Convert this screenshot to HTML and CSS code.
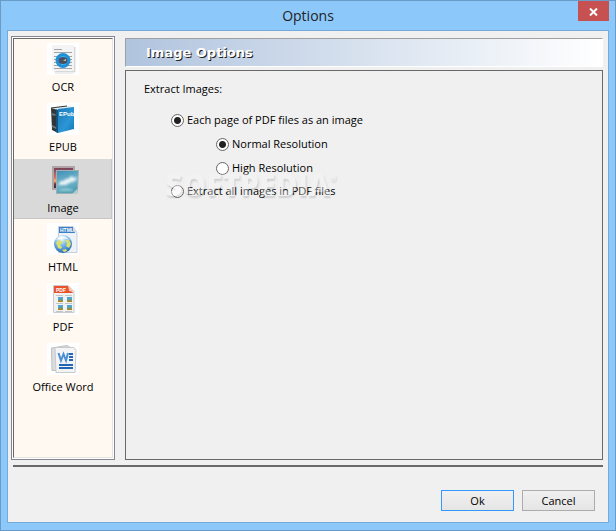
FILE: index.html
```html
<!DOCTYPE html>
<html lang="en">
<head>
<meta charset="utf-8">
<title>Options</title>
<link rel="stylesheet" href="styles.css">
</head>
<body>
<div class="window">
  <header class="titlebar">
    <h1 class="title">Options</h1>
    <button class="close" type="button" aria-label="Close">
      <svg width="9" height="8" viewBox="0 0 9 8"><path d="M1 .5 8 7.5M8 .5 1 7.5" stroke="#fff" stroke-width="2" fill="none"/></svg>
    </button>
  </header>
  <main class="client">
    <div class="columns">
      <nav class="sidebar">
        <div class="list">
          <button class="item" type="button">
            <svg class="icon" viewBox="0 0 32 32">
              <rect width="32" height="32" fill="#fff"/>
              <path d="M5 4h24v25l-4 2H8z" fill="#eee"/><path d="M6 4h22v25H8z" fill="#d8d8d8"/>
              <rect x="5" y="2" width="22" height="26" rx="1" fill="#f4f4f4"/>
              <path d="M7 6.500h8M7 9.500h18M7 13.500h18M7 16.500h18M7 19.500h18M7 22.500h18M7 25.500h18" stroke="#a3a3a3"/>
              <circle cx="16" cy="17.500" r="6" fill="#3fb0ef" stroke="#1e90d8" stroke-width="3"/>
              <ellipse cx="16" cy="17.500" rx="4.500" ry="3.500" fill="#4b5060"/>
              <path d="M16 17.500l3-1.500v2z" fill="#c4ccd4"/>
            </svg>
            <span>OCR</span>
          </button>
          <button class="item" type="button">
            <svg class="icon" viewBox="0 0 32 32">
              <defs><linearGradient id="book" x2="1" y2="1"><stop stop-color="#1a78b5"/><stop offset=".6" stop-color="#2c96d6"/><stop offset="1" stop-color="#1277b5"/></linearGradient></defs>
              <rect width="32" height="32" fill="#fff"/>
              <path d="M4 5 20 3l7 1v2L11 7z" fill="#dfe9f0"/><path d="M4 5 20 3" stroke="#333"/>
              <path d="M4 5l7 2v23l-6-3z" fill="#30373c"/>
              <path d="M9 6.500 11 7v23l-2-1z" fill="#11557f"/>
              <path d="M4.500 10l4 1v2l-4-1zM5 22l4 2v2l-4-2z" fill="#6c757b"/>
              <path d="M11 6 27 4v22l-16 4z" fill="url(#book)"/>
              <text class="epub-mark" x="12" y="13">EPub</text>
            </svg>
            <span>EPUB</span>
          </button>
          <button class="item selected" type="button" aria-current="page">
            <svg class="icon" viewBox="0 0 32 32">
              <defs>
                <linearGradient id="dusk" x2="0" y2="1"><stop stop-color="#76435a"/><stop offset=".5" stop-color="#dc7265"/><stop offset=".65" stop-color="#ffb95b"/><stop offset=".8" stop-color="#653849"/><stop offset="1" stop-color="#402b3b"/></linearGradient>
                <linearGradient id="sky" x2=".3" y2="1"><stop stop-color="#3f8fb4"/><stop offset=".6" stop-color="#74b6ce"/><stop offset="1" stop-color="#4c9eb4"/></linearGradient>
                <filter id="soft"><feGaussianBlur stdDeviation="1"/></filter>
              </defs>
              <path d="M5 2h23v24H5z" fill="#b0a5a6"/><path d="M7 4h19v20H7z" fill="url(#dusk)"/>
              <path d="M9 6h23l-1 20-1 4H9z" fill="#9fb0b4"/><path d="M10 7h21l-1 19-2 3H10z" fill="url(#sky)"/>
              <g filter="url(#soft)">
                <path d="M12 19q2-3 5-2 1-3 4-2 4-5 6-1l3-1-2 4-6 2-3 2-7 0z" fill="#e6f1f4"/>
                <path d="M12 26q7-3 15 0l-2 1H12z" fill="#9cced4"/>
              </g>
              <path d="m25 30 5-5v5z" fill="#b5caca"/>
            </svg>
            <span>Image</span>
          </button>
          <button class="item" type="button">
            <svg class="icon" viewBox="0 0 32 32">
              <defs><radialGradient id="globe" cx=".4" cy=".2" r=".85"><stop stop-color="#fff"/><stop offset=".45" stop-color="#78b8ec"/><stop offset="1" stop-color="#1c62b0"/></radialGradient></defs>
              <rect width="32" height="32" fill="#fff"/>
              <path d="M11.500 3.500H26l4 6v20H11.500z" fill="#edf1f8" stroke="#c6cedb"/>
              <path d="M12 4h14l2 6H12z" fill="#3b7fc4"/><path d="m26 3 4 7-4-2z" fill="#d5deea"/>
              <text class="html-mark" x="13" y="9">HTML</text>
              <circle cx="16" cy="21" r="9" fill="url(#globe)"/>
              <path d="M9 20q2-4 5-2l2 1-3 3 2 2-1 2-3-1-1-3zM18 17l4 0 2 4-2 4-3-2 1-3zM15 27l4-1 1 2-3 1z" fill="#dbe06a"/>
              <path d="M9 17q6-8 14 0-8-3-14 0z" fill="#fff" opacity=".7"/>
            </svg>
            <span>HTML</span>
          </button>
          <button class="item" type="button">
            <svg class="icon" viewBox="0 0 32 32">
              <rect width="32" height="32" fill="#fff"/>
              <path d="M6.500 2.500H21l6 6v21H6.500z" fill="#f1f1f1" stroke="#ccc"/>
              <path d="M7 3h14l5 7H7z" fill="#e8532e"/><path d="m21 2 6 7-5-1z" fill="#f7c7b4"/>
              <text class="pdf-mark" x="9" y="9">PDF</text>
              <path d="M9 12.500h7m2 0h7M9 20.500h7m2 0h7M9 28.500h7m2 0h7" stroke="#c4c4c4"/>
              <path d="M11 14h5v5h-5zM20 14h5v5h-5zM11 22h5v5h-5zM20 22h5v5h-5z" fill="#4ba6d1"/>
              <path d="M11 18l3-2 2 2v1h-5zM20 18l3-2 2 2v1h-5zM11 26l3-2 2 2v1h-5zM20 26l3-2 2 2v1h-5z" fill="#a68a2e"/>
            </svg>
            <span>PDF</span>
          </button>
          <button class="item" type="button">
            <svg class="icon" viewBox="0 0 32 32">
              <rect width="32" height="32" fill="#fff"/>
              <path d="M4.500 5 20 2.500 24 5v22L5 27.500z" fill="#dcdcdc" stroke="#c0c0c0"/>
              <path d="M8 4.500h19l2 3-1 22H9z" fill="#f3f4f6" stroke="#c8cacc"/>
              <path d="M11.500 10 14 17.500 16.500 11 19 17.500 21 10" fill="none" stroke="#4a8fd4" stroke-width="2"/>
              <path d="M22 11h4M22 14h4M22 17h4M12 22h14M12 25h14" stroke="#2266b8" stroke-width="2"/>
            </svg>
            <span>Office Word</span>
          </button>
        </div>
      </nav>
      <section class="content">
        <h2 class="banner">Image Options</h2>
        <div class="panel">
          <p class="caption">Extract Images:</p>
          <div class="choices">
            <label class="choice"><input type="radio" name="mode" checked>Each page of PDF files as an image</label>
            <div class="sub">
              <label class="choice"><input type="radio" name="resolution" checked>Normal Resolution</label>
              <label class="choice"><input type="radio" name="resolution">High Resolution</label>
            </div>
            <label class="choice last"><input type="radio" name="mode">Extract all images in PDF files<span class="watermark" aria-hidden="true">SOFTPEDIA<sup>®</sup></span></label>
          </div>
        </div>
      </section>
    </div>
    <hr class="rule">
    <footer class="actions">
      <button class="btn primary" type="button">Ok</button>
      <button class="btn" type="button">Cancel</button>
    </footer>
  </main>
</div>
</body>
</html>
```
FILE: styles.css
```css
* { box-sizing: border-box; }

body {
  margin: 0;
  font: 11px/16px "Open Sans", "Noto Sans", sans-serif;
  color: #000;
}

button { font: inherit; color: inherit; }

.window {
  display: flex;
  flex-direction: column;
  min-height: 100vh;
  padding: 0 6px 7px;
  border: 1px solid #6a9ac6;
  background: #8cc8fa;
}

.titlebar {
  display: grid;
  grid-template-columns: 1fr auto 1fr;
  height: 29px;
}

.title {
  grid-column: 2;
  margin: 0;
  font-size: 14px;
  font-weight: 400;
  line-height: 30px;
  color: #222;
}

.close {
  display: grid;
  place-items: center;
  justify-self: end;
  width: 31px;
  height: 20px;
  padding: 2px 0 0;
  border: 0;
  background: #c75050;
}

.client {
  display: flex;
  flex: 1;
  flex-direction: column;
  padding: 5px 5px 11px 3px;
  border: 1px solid #75a9d9;
  background: #f0f0f0;
}

.columns {
  display: flex;
  flex: 1;
  gap: 10px;
}

.sidebar {
  display: flex;
  width: 104px;
  padding: 1px;
  border: 1px solid #828790;
  background: #fff;
}

.list {
  flex: 1;
  border: 1px solid;
  border-color: #696969 #e3e3e3 #e3e3e3 #696969;
  background: #fff9f2;
}

.item {
  display: flex;
  flex-direction: column;
  align-items: center;
  gap: 4px;
  width: 100%;
  height: 60px;
  padding: 4px 0 0;
  border: 0;
  background: none;
}

.item.selected {
  padding-top: 5px;
  background: #d9d9d9;
  box-shadow: inset -1px -1px #c6c6c6;
}

.icon { flex: none; width: 32px; height: 32px; }

.epub-mark, .html-mark, .pdf-mark {
  font-family: "Liberation Sans", sans-serif;
  font-weight: 700;
  fill: #fff;
}

.epub-mark { font-size: 6px; }
.html-mark, .pdf-mark { font-size: 5px; }

.content {
  display: flex;
  flex: 1;
  flex-direction: column;
  gap: 3px;
  padding-top: 2px;
}

.banner {
  margin: 0;
  padding: 0 20px;
  border: 1px solid;
  border-color: #a0a0a0 #fff #fff #a0a0a0;
  background: linear-gradient(90deg, #b0c4de, #fff);
  font: 700 13px/27px "DejaVu Sans", sans-serif;
  color: #fff;
  text-shadow: 1px 1px #222;
}

.panel {
  flex: 1;
  padding: 10px 18px;
  border: 1px solid #696969;
}

.caption { margin: 0; }

.choices {
  display: flex;
  flex-direction: column;
  align-items: flex-start;
  gap: 8px;
  padding: 15px 27px;
}

.sub {
  display: flex;
  flex-direction: column;
  gap: 8px;
  padding-left: 45px;
}

.choice {
  position: relative;
  display: flex;
  align-items: center;
  gap: 3px;
}

.last { margin-top: -1px; }

.choice input {
  appearance: none;
  width: 13px;
  height: 13px;
  margin: 0;
  border: 1px solid #666;
  border-radius: 50%;
  background: #fff;
}

.choice input:checked {
  background: radial-gradient(circle, #222 3px, #fff 4px);
}

.watermark {
  position: absolute;
  top: -14px;
  left: -6px;
  font: 800 30px/32px "Open Sans", sans-serif;
  color: #f6f6f6;
  opacity: 0.4;
  text-shadow: 1px 2px 2px rgb(0 0 0 / 35%);
  white-space: nowrap;
  pointer-events: none;
}

.watermark sup { font-size: 8px; line-height: 8px; vertical-align: 15px; }

.rule {
  width: calc(100% - 2px);
  height: 2px;
  margin: 5px 0 23px 2px;
  border: 0;
  background: #6a6a6a;
}

.actions {
  display: flex;
  justify-content: flex-end;
  gap: 8px;
  padding-right: 8px;
}

.btn {
  width: 73px;
  height: 21px;
  padding: 0;
  border: 1px solid #acacac;
  background: linear-gradient(#f0f0f0, #e5e5e5);
}

.btn.primary { border-color: #3399ff; }
```
